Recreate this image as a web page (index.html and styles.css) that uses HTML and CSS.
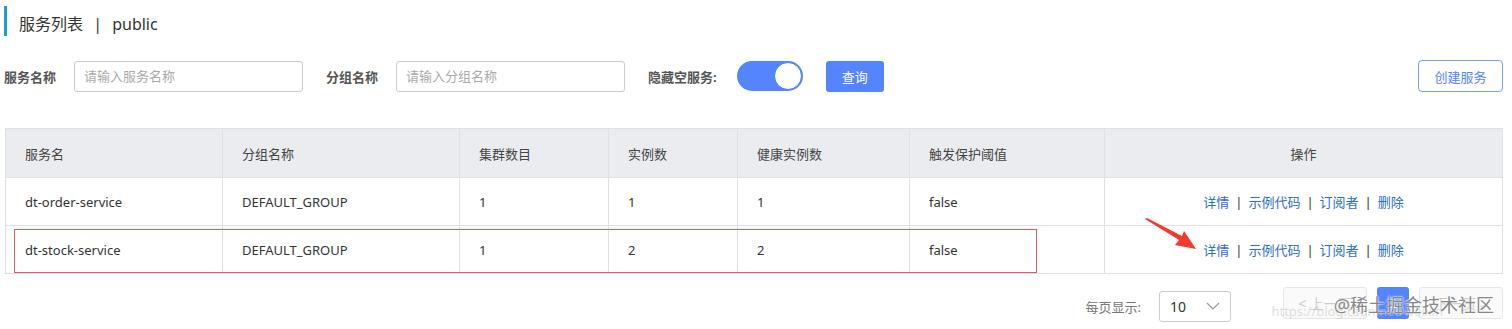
FILE: index.html
```html
<!DOCTYPE html>
<html lang="zh-CN">
<head>
    <meta charset="UTF-8">
    <title>服务列表</title>
    <link rel="stylesheet" href="styles.css">
</head>
<body>
    <div class="page">
        <div class="title-bar">
            <h2>服务列表 <span class="sep">|</span> public</h2>
        </div>

        <div class="search-row">
            <label class="field-label">服务名称</label>
            <input class="field-input" placeholder="请输入服务名称">
            <label class="field-label gap">分组名称</label>
            <input class="field-input" placeholder="请输入分组名称">
            <label class="field-label gap">隐藏空服务:</label>
            <div class="switch"><span class="knob"></span></div>
            <button class="btn-primary">查询</button>
            <div class="spacer"></div>
            <button class="btn-outline">创建服务</button>
        </div>

        <div class="table-wrap">
            <table class="svc-table">
                <colgroup>
                    <col style="width:217px">
                    <col style="width:237px">
                    <col style="width:149px">
                    <col style="width:129px">
                    <col style="width:172px">
                    <col style="width:195px">
                    <col>
                </colgroup>
                <thead>
                    <tr>
                        <th>服务名</th>
                        <th>分组名称</th>
                        <th>集群数目</th>
                        <th>实例数</th>
                        <th>健康实例数</th>
                        <th>触发保护阈值</th>
                        <th class="center">操作</th>
                    </tr>
                </thead>
                <tbody>
                    <tr>
                        <td>dt-order-service</td>
                        <td>DEFAULT_GROUP</td>
                        <td>1</td>
                        <td>1</td>
                        <td>1</td>
                        <td>false</td>
                        <td class="center ops"><a>详情</a><i>|</i><a>示例代码</a><i>|</i><a>订阅者</a><i>|</i><a>删除</a></td>
                    </tr>
                    <tr>
                        <td>dt-stock-service</td>
                        <td>DEFAULT_GROUP</td>
                        <td>1</td>
                        <td>2</td>
                        <td>2</td>
                        <td>false</td>
                        <td class="center ops"><a>详情</a><i>|</i><a>示例代码</a><i>|</i><a>订阅者</a><i>|</i><a>删除</a></td>
                    </tr>
                </tbody>
            </table>
            <div class="mark-box"></div>
            <svg class="mark-arrow" width="60" height="36" viewBox="0 0 60 36">
                <polygon points="1,1 3,0 38,18 40,13 52,31 31,27 35,22" fill="#f23a2f"/>
            </svg>
        </div>

        <div class="pager">
            <span class="pager-label">每页显示:</span>
            <div class="page-size">10
                <svg class="chev" width="14" height="8" viewBox="0 0 14 8"><polyline points="1,1 7,7 13,1" fill="none" stroke="#999" stroke-width="1.2"/></svg>
            </div>
            <button class="pg-btn prev">&lt; 上一页</button>
            <button class="pg-num">1</button>
            <button class="pg-btn next">下一页 &gt;</button>
            <span class="wm-url">https://blog.csdn.net/weixin</span>
            <span class="wm">@稀土掘金技术社区</span>
        </div>
    </div>
</body>
</html>
```

FILE: styles.css
```css
body {
    margin: 0;
    background: #fff;
    font-family: "Noto Sans", "Noto Sans CJK SC", sans-serif;
    color: #333;
}
.page {
    padding: 6px 9px 0 4px;
}
.title-bar {
    border-left: 3px solid #1e9bd4;
    height: 30px;
    display: flex;
    align-items: center;
    padding: 3px 0 0 12px;
    box-sizing: border-box;
}
.title-bar h2 {
    margin: 0;
    font-size: 16px;
    font-weight: normal;
    color: #333;
}
.title-bar .sep {
    margin: 0 6px;
}
.search-row {
    display: flex;
    align-items: center;
    margin-top: 24px;
    height: 32px;
}
.field-label {
    font-size: 13px;
    font-weight: bold;
    color: #555;
    margin-right: 18px;
}
.field-label.gap {
    margin-left: 23px;
}
.field-input {
    width: 229px;
    height: 31px;
    box-sizing: border-box;
    border: 1px solid #ccc;
    border-radius: 3px;
    padding: 0 9px;
    font-family: inherit;
    font-size: 13px;
}
.field-input::placeholder {
    color: #aaa;
}
.switch {
    width: 66px;
    height: 30px;
    border-radius: 15px;
    background: #5584ff;
    position: relative;
    margin-left: 2px;
}
.knob {
    position: absolute;
    right: 1px;
    top: 1px;
    width: 26px;
    height: 26px;
    border-radius: 50%;
    background: #fff;
    border: 1px solid #4d7cf2;
}
.btn-primary {
    margin-left: 23px;
    width: 58px;
    height: 31px;
    border: none;
    border-radius: 3px;
    background: #5584ff;
    color: #fff;
    font-family: inherit;
    font-size: 13px;
}
.spacer {
    flex: 1;
}
.btn-outline {
    width: 85px;
    height: 32px;
    border: 1px solid #7d9ef5;
    border-radius: 4px;
    background: #fff;
    color: #5584ff;
    font-family: inherit;
    font-size: 13px;
}
.table-wrap {
    position: relative;
    margin: 36px 0 0 1px;
}
.svc-table {
    width: 1498px;
    border-collapse: collapse;
    table-layout: fixed;
    font-size: 13px;
    color: #333;
}
.svc-table th,
.svc-table td {
    border: 1px solid #dfe1e6;
    text-align: left;
    padding: 0 19px;
}
.svc-table th {
    background: #ebecf0;
    height: 48px;
    font-weight: normal;
    color: #444;
}
.svc-table td {
    height: 47px;
}
.svc-table .center {
    text-align: center;
}
.ops a {
    color: #2a6fc9;
}
.ops i {
    font-style: normal;
    color: #333;
    margin: 0 6px;
}
.mark-box {
    position: absolute;
    left: 9px;
    top: 101px;
    width: 1021px;
    height: 42px;
    border: 1px solid #e5585c;
}
.mark-arrow {
    position: absolute;
    left: 1139px;
    top: 90px;
}
.pager {
    position: relative;
    display: flex;
    align-items: center;
    margin-top: 16px;
    height: 32px;
    justify-content: flex-end;
}
.pager-label {
    font-size: 13px;
    color: #777;
    margin-right: 18px;
}
.page-size {
    width: 72px;
    height: 31px;
    box-sizing: border-box;
    border: 1px solid #ccc;
    border-radius: 3px;
    display: flex;
    align-items: center;
    padding: 0 10px;
    font-size: 14px;
    color: #333;
    margin-right: 52px;
}
.chev {
    margin-left: auto;
}
.pg-btn {
    width: 84px;
    height: 32px;
    border: 1px solid #e6e6e6;
    border-radius: 3px;
    background: #fafafa;
    color: #ccc;
    font-family: inherit;
    font-size: 14px;
    margin-top: -6px;
}
.pg-num {
    width: 32px;
    height: 32px;
    margin: -6px 10px 0;
    border: none;
    border-radius: 3px;
    background: #5584ff;
    color: #fff;
    font-size: 13px;
}
.wm {
    position: absolute;
    right: 9px;
    top: 1px;
    font-size: 18px;
    color: #888;
    text-shadow: 0 0 2px #fff, 0 0 2px #fff;
}
.wm-url {
    position: absolute;
    right: 60px;
    top: 12px;
    font-size: 13px;
    color: rgba(200, 200, 200, 0.6);
}
```
